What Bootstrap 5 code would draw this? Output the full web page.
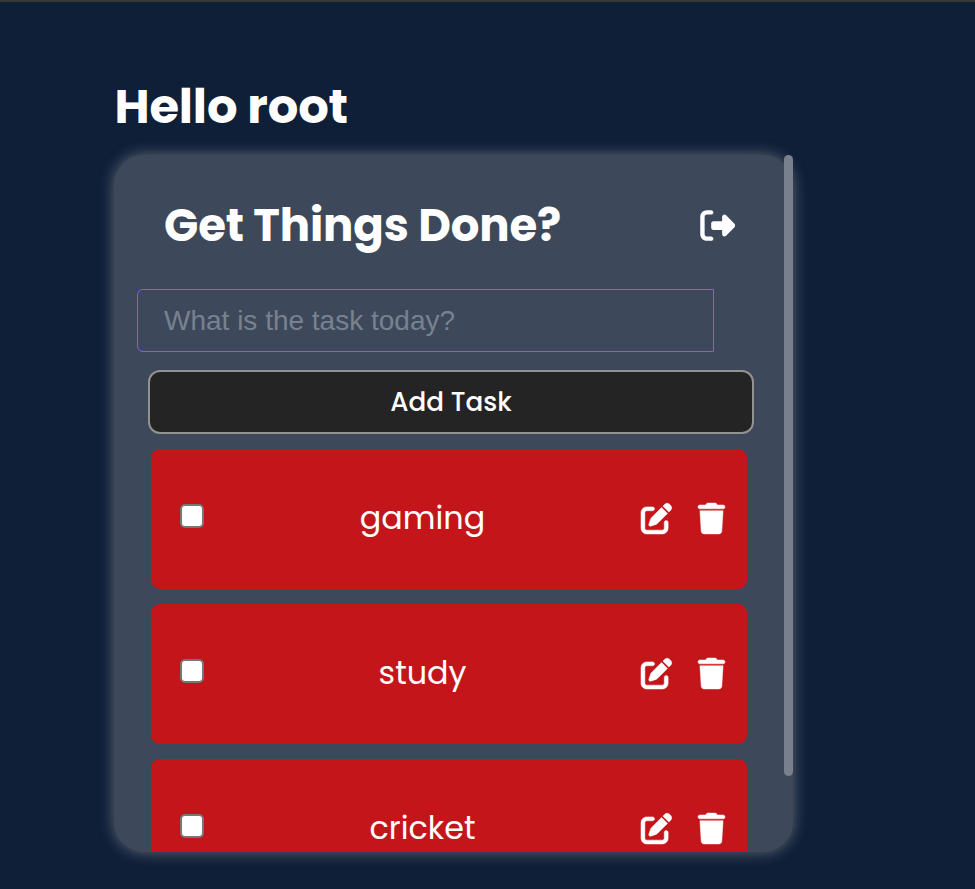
<!DOCTYPE html>
<html lang="en">
<head>
<meta charset="utf-8">
<meta name="viewport" content="width=device-width, initial-scale=1">
<title>Get Things Done</title>
<link href="https://cdn.jsdelivr.net/npm/bootstrap@5.3.0/dist/css/bootstrap.min.css" rel="stylesheet">
<style>
body{background:#0f1f38;color:#fff;font-family:Poppins,Inter,sans-serif;height:889px;border-top:2px solid #383838;overflow:hidden}
.page-wrap{width:679px;margin-left:114px;padding-top:77px}
.greeting{font-size:48px;font-weight:700;line-height:56px;letter-spacing:-.15px;margin:0 0 20px .5px;white-space:nowrap}
.todo-panel{height:697px;background:#3d495b;border-radius:30px;box-shadow:0 0 15px rgba(255,250,235,.34);overflow:hidden}
.scroll-thumb{top:0;right:0;width:9px;height:621px;background:#78808e;border-radius:5px}
.panel-head{height:134px;padding:7px 58px 0 50px}
.panel-title{font-size:45px;font-weight:700;white-space:nowrap;line-height:56px;letter-spacing:-.13px}
.logout-icon{margin-bottom:1px}
.task-input{width:577px;height:63px;margin:0 0 18px 23px;padding:0 26px;border:1px solid #8758ff;border-radius:6px 0 0 6px;background:transparent;color:#fff;font:28px "Liberation Sans",Arial,sans-serif}
.task-input::placeholder{color:#78818f;opacity:1}
.add-btn,.add-btn:hover{width:606px;height:64px;margin:0 0 15px 34px;background:#242424;border:2px solid #949290;border-radius:12px;color:#fff;font-size:26.2px;font-weight:500;line-height:1}
.task-row{width:596px;height:140px;margin:0 0 15px 37px;padding:0 22px 0 29px;background:#c4161a;border-radius:9px}
.task-check{appearance:none;width:24px;height:24px;margin:0 0 6px;background:#fff;border:2px solid #767676;border-radius:5px}
.task-name{font-size:31.8px;line-height:40px;margin-bottom:2px}
.task-tools{gap:26px;margin-bottom:1px}
svg{fill:#fff;display:block}
.task-tools svg{stroke:#fff;stroke-width:8px;overflow:visible}
</style>
</head>
<body>
<svg class="d-none"><defs>
<path id="pen" d="M471.6 21.7c-21.9-21.9-57.3-21.9-79.2 0L362.3 51.7l97.9 97.9 30.1-30.1c21.9-21.9 21.9-57.3 0-79.2L471.6 21.7zm-299.2 220c-6.1 6.1-10.8 13.6-13.5 21.9l-29.6 88.8c-2.9 8.6-.6 18.1 5.8 24.6s15.9 8.7 24.6 5.8l88.8-29.6c8.2-2.7 15.7-7.4 21.9-13.5L437.7 172.3 339.7 74.3 172.4 241.7zM96 64C43 64 0 107 0 160L0 416c0 53 43 96 96 96l256 0c53 0 96-43 96-96l0-96c0-17.7-14.3-32-32-32s-32 14.3-32 32l0 96c0 17.7-14.3 32-32 32L96 448c-17.7 0-32-14.3-32-32l0-256c0-17.7 14.3-32 32-32l96 0c17.7 0 32-14.3 32-32s-14.3-32-32-32L96 64z"/>
<path id="trash" d="M135.2 17.7L128 32 32 32C14.3 32 0 46.3 0 64S14.3 96 32 96l384 0c17.7 0 32-14.3 32-32s-14.3-32-32-32l-96 0-7.2-14.3C307.4 6.8 296.3 0 284.2 0L163.8 0c-12.1 0-23.2 6.8-28.6 17.7zM416 128L32 128 53.2 467c1.6 25.3 22.6 45 47.9 45l245.8 0c25.3 0 46.3-19.7 47.9-45L416 128z"/>
</defs></svg>
<main class="page-wrap">
<h1 class="greeting">Hello root</h1>
<div class="position-relative">
<section class="todo-panel d-flex flex-column align-items-start">
<header class="panel-head w-100 d-flex align-items-center justify-content-between flex-shrink-0">
<h2 class="panel-title m-0">Get Things Done?</h2>
<svg class="logout-icon" width="35.5" height="35" viewBox="0 0 512 512"><path d="M377.9 105.9L500.7 228.7c7.2 7.2 11.3 17.1 11.3 27.3s-4.1 20.1-11.3 27.3L377.9 406.1c-6.4 6.4-15 9.9-24 9.9c-18.7 0-33.9-15.2-33.9-33.9l0-62.1-128 0c-17.7 0-32-14.3-32-32l0-64c0-17.7 14.3-32 32-32l128 0 0-62.1c0-18.7 15.2-33.9 33.9-33.9c9 0 17.6 3.6 24 9.9zM160 96L96 96c-17.7 0-32 14.3-32 32l0 256c0 17.7 14.3 32 32 32l64 0c17.7 0 32 14.3 32 32s-14.3 32-32 32l-64 0c-53 0-96-43-96-96L0 128C0 75 43 32 96 32l64 0c17.7 0 32 14.3 32 32s-14.3 32-32 32z"/></svg>
</header>
<input class="task-input flex-shrink-0" type="text" placeholder="What is the task today?">
<button class="btn add-btn flex-shrink-0" type="button">Add Task</button>
<div class="task-row d-flex align-items-center flex-shrink-0">
<input class="task-check" type="checkbox"><span class="task-name flex-fill text-center">gaming</span>
<span class="d-flex task-tools"><svg width="31" height="31" viewBox="0 0 512 512"><use href="#pen"/></svg><svg width="27" height="31" viewBox="0 0 448 512"><use href="#trash"/></svg></span>
</div>
<div class="task-row d-flex align-items-center flex-shrink-0">
<input class="task-check" type="checkbox"><span class="task-name flex-fill text-center">study</span>
<span class="d-flex task-tools"><svg width="31" height="31" viewBox="0 0 512 512"><use href="#pen"/></svg><svg width="27" height="31" viewBox="0 0 448 512"><use href="#trash"/></svg></span>
</div>
<div class="task-row d-flex align-items-center flex-shrink-0">
<input class="task-check" type="checkbox"><span class="task-name flex-fill text-center">cricket</span>
<span class="d-flex task-tools"><svg width="31" height="31" viewBox="0 0 512 512"><use href="#pen"/></svg><svg width="27" height="31" viewBox="0 0 448 512"><use href="#trash"/></svg></span>
</div>
</section>
<div class="scroll-thumb position-absolute"></div>
</div>
</main>
<script src="https://cdn.jsdelivr.net/npm/bootstrap@5.3.0/dist/js/bootstrap.bundle.min.js"></script>
</body>
</html>
